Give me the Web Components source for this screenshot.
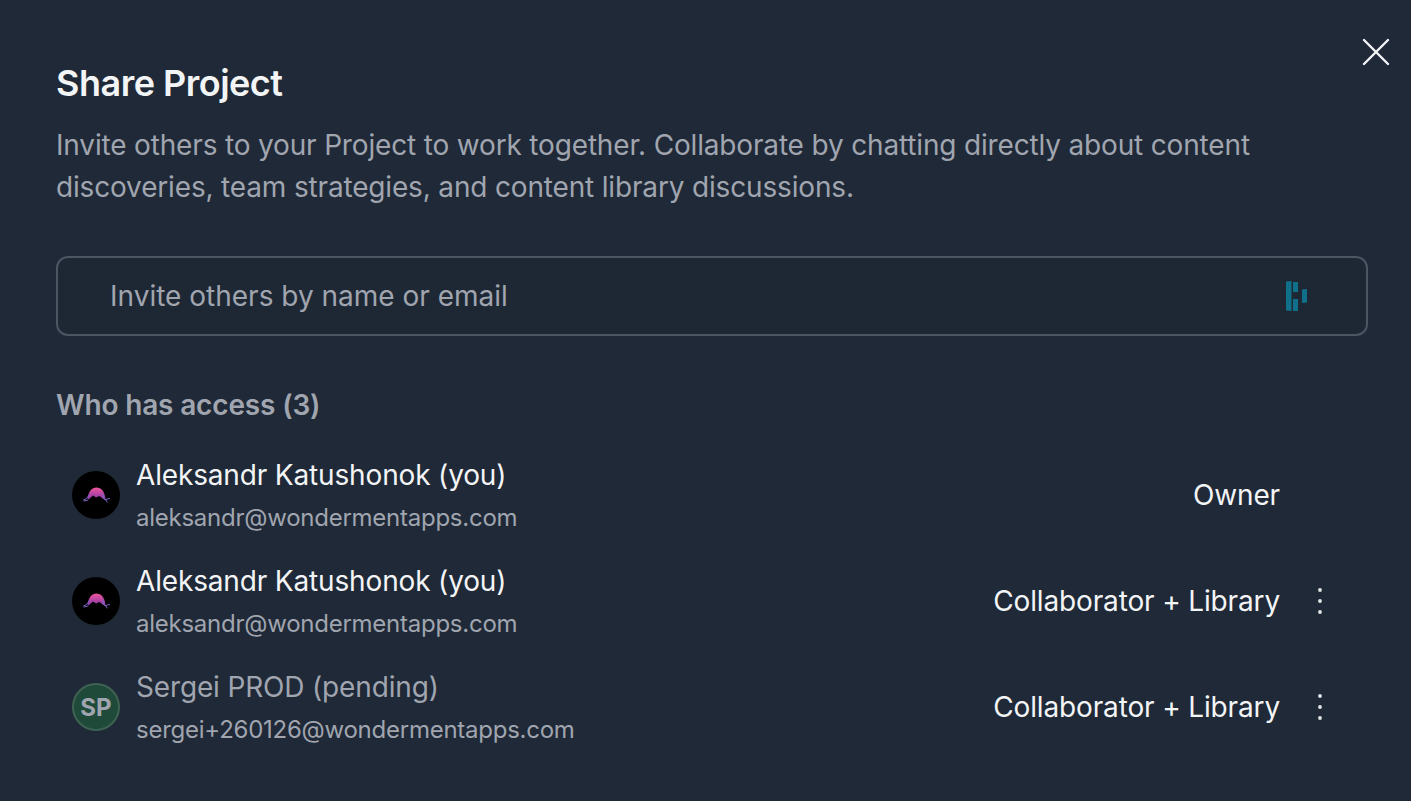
<!DOCTYPE html>
<html><head><meta charset="utf-8"><style>
html,body{margin:0;height:100%;background:#1f2937;overflow:hidden}
body{font-family:Inter,"Liberation Sans",sans-serif;-webkit-font-smoothing:antialiased}
</style></head><body>
<template id="t-row"><style>
:host{display:flex;align-items:center;height:106px;padding:0 16px;box-sizing:border-box;gap:16px}
.txt{flex:1;display:flex;flex-direction:column;min-width:0;margin-top:3px}
.name{font-size:28px;line-height:42px;color:#f3f4f6;letter-spacing:-.155px}
.mail{font-size:24px;line-height:42px;color:#a0a5af;letter-spacing:-.25px;margin-top:1px}
:host([pending]) .name{color:#a0a5af}
.role{font-size:28px;line-height:42px;color:#f3f4f6;letter-spacing:-.145px}
.menu{width:24px;height:48px;margin:0 20px 0 12px;display:flex;align-items:center;justify-content:center}
.menu svg{display:block}
</style><slot name="avatar"></slot><div class="txt"><div class="name"></div><div class="mail"></div></div><div class="role"></div><div class="menu"></div></template>
<template id="t-dlg"><style>
:host{display:block;position:relative;padding:56px 43px 0 56px;box-sizing:border-box;height:801px}
h1{margin:0;font-size:36px;line-height:54px;font-weight:600;color:#f3f4f6;letter-spacing:-.5px}
p{margin:14px 0 0;font-size:28px;line-height:42px;color:#a0a5af;max-width:1240px;letter-spacing:-.165px}
.input{margin-top:48px;height:80px;box-sizing:border-box;border:2px solid #4b5563;border-radius:12px;background:#1e2835;display:flex;align-items:center;padding:0 57px 0 52px}
.ph{flex:1;font-size:28px;line-height:42px;color:#a0a5af}
h2{margin:48px 0 0;font-size:28px;line-height:42px;font-weight:600;color:#a0a5af;letter-spacing:-.16px}
.list{margin-top:16px}
.close{position:absolute;top:36px;right:19px;width:32px;height:32px}
svg{display:block}
</style><h1>Share Project</h1><p>Invite others to your Project to work together. Collaborate by chatting directly about content discoveries, team strategies, and content library discussions.</p>
<div class="input"><span class="ph">Invite others by name or email</span><svg width="24" height="32" viewBox="0 0 24 32"><g fill="#10708a"><path d="M1 1.5 6.500 1V31L1 30.500z"/><rect x="8" y="2" width="5" height="10"/><rect x="8" y="19" width="5" height="12"/><path d="M17 9.500 22 9V22.500L17 23z"/></g></svg></div>
<h2>Who has access (3)</h2><div class="list"><slot></slot></div>
<div class="close"><svg width="32" height="32" viewBox="0 0 32 32" fill="none" stroke="#f3f4f6" stroke-width="2.4" stroke-linecap="round"><path d="M4 4 28 28M28 4 4 28"/></svg></div></template>
<template id="t-av"><style>
:host{display:block;width:48px;height:48px;flex:none}
.a{width:48px;height:48px;border-radius:50%;box-sizing:border-box;display:flex;align-items:center;justify-content:center}
.logo{background:#000}
.sp{background:#1f4a3a;border:2px solid #3f6353;color:#a0a5af;font-size:24px;font-weight:700}
svg{display:block}
</style><div class="a"></div></template>
<share-dialog>
<share-row name="Aleksandr Katushonok (you)" mail="aleksandr@wondermentapps.com" role="Owner"><share-av slot="avatar"></share-av></share-row>
<share-row name="Aleksandr Katushonok (you)" mail="aleksandr@wondermentapps.com" role="Collaborator + Library" menu><share-av slot="avatar"></share-av></share-row>
<share-row pending name="Sergei PROD (pending)" mail="sergei+260126@wondermentapps.com" role="Collaborator + Library" menu><share-av slot="avatar" initials="SP"></share-av></share-row>
</share-dialog>
<script>
const mount=(el,id)=>{const s=el.attachShadow({mode:'open'});s.appendChild(document.getElementById(id).content.cloneNode(true));return s};
customElements.define('share-dialog',class extends HTMLElement{constructor(){super();mount(this,'t-dlg')}});
customElements.define('share-row',class extends HTMLElement{constructor(){super();this.s=mount(this,'t-row')}
connectedCallback(){const s=this.s;s.querySelector('.name').textContent=this.getAttribute('name');s.querySelector('.mail').textContent=this.getAttribute('mail');s.querySelector('.role').textContent=this.getAttribute('role');
if(this.hasAttribute('menu'))s.querySelector('.menu').innerHTML='<svg width="6" height="28" viewBox="0 0 6 28" fill="#e5e7eb"><circle cx="3" cy="3" r="1.9"/><circle cx="3" cy="14" r="1.9"/><circle cx="3" cy="25" r="1.9"/></svg>';}});
let gid=0;
customElements.define('share-av',class extends HTMLElement{constructor(){super();this.s=mount(this,'t-av')}
connectedCallback(){const a=this.s.querySelector('.a'),i=this.getAttribute('initials');if(i){a.classList.add('sp');a.textContent=i}else{a.classList.add('logo');const g='g'+(++gid);a.innerHTML='<svg width="32" height="24" viewBox="0 0 32 24" fill="none"><defs><linearGradient id="'+g+'" x1="0" y1="0" x2="0" y2="1"><stop offset="0" stop-color="#f0559c"/><stop offset="1" stop-color="#8a3aa8"/></linearGradient></defs><path d="M7.500 16C8.500 8 12 4.500 16.500 4.500c4.500 0 8 3.500 9 11.500z" fill="url(#'+g+')"/><path d="M8 17 13 12.500l3 2 3.500-1.500L25 17.500V19H8z" fill="#000"/><path d="M3.500 17l3-1.500 3-4M4 18l4-1M23 11l1 5 2 1 1 2M25.500 16.500l4-1" stroke="#7d68c4" stroke-width="1" stroke-linecap="round"/></svg>'}}});
</script></body></html>
